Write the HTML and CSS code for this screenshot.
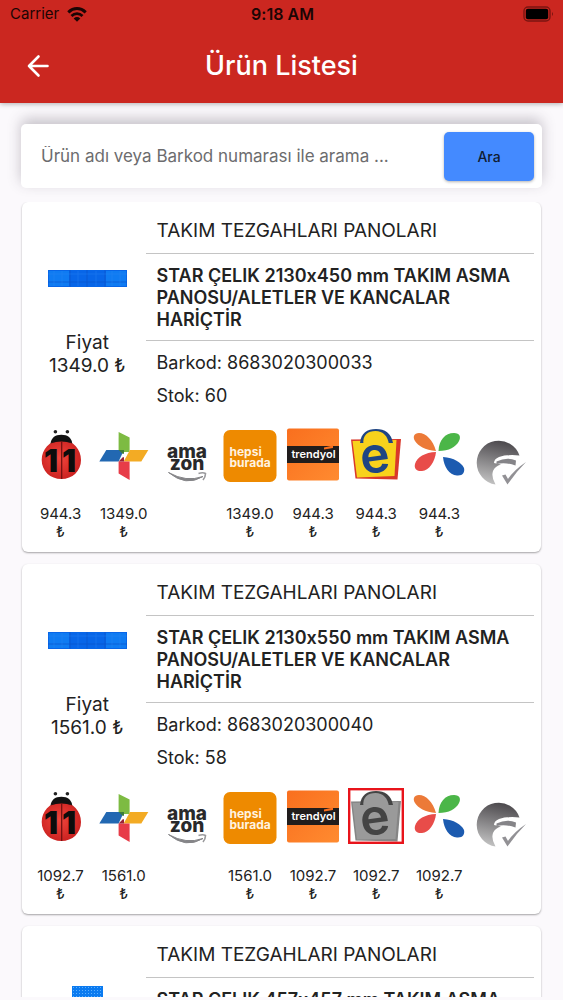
FILE: index.html
```html
<!DOCTYPE html>
<html lang="tr">
<head>
	<meta charset="UTF-8">
	<meta name="viewport" content="width=device-width, initial-scale=1">
	<title>Ürün Listesi</title>
	<link rel="stylesheet" href="styles.css">
</head>
<body>
	<!-- gradients -->
	<svg class="paints" aria-hidden="true">
		<defs>
			<radialGradient id="gBug" cx="45%" cy="45%" r="60%">
				<stop offset="0" stop-color="#f0453c"/>
				<stop offset="1" stop-color="#c9201f"/>
			</radialGradient>
			<linearGradient id="gTrend" x1="0" y1="0" x2="1" y2="1">
				<stop offset="0" stop-color="#f96f1e"/>
				<stop offset="1" stop-color="#ff8b30"/>
			</linearGradient>
			<linearGradient id="gGlobe" x1="0.6" y1="0" x2="0.4" y2="1">
				<stop offset="0" stop-color="#4b484c"/>
				<stop offset="1" stop-color="#c2c2c2"/>
			</linearGradient>
			<pattern id="pDots" width="3" height="3" patternUnits="userSpaceOnUse">
				<rect width="3" height="3" fill="#0a7af0"/>
				<rect x="1" y="1" width="1" height="1" fill="#5cb0ff"/>
			</pattern>
		</defs>
	</svg>
	<!-- logo symbols -->
	<svg class="sprite" aria-hidden="true">
		<symbol id="n11" viewBox="0 0 56 62">
			<circle cx="22.4" cy="5.7" r="1.8" fill="#222"/>
			<circle cx="34.4" cy="5.7" r="1.8" fill="#222"/>
			<path d="M17.5 18C18 12 22 8.8 28.4 8.8S38.8 12 39.3 18z" fill="#111"/>
			<path d="M28.4 14.500C40 14 48 23 48 34C48 45 39.500 53 28.400 53S8.700 45 8.700 34C8.700 23 17 14 28.400 14.500z" fill="url(#gBug)"/>
			<path d="M17.500 17.500Q28.400 8 39.300 17.500Q28.400 13.500 17.500 17.500z" fill="#111"/>
			<path d="M28.700 15V53" stroke="#6d1010" stroke-width="1.2"/>
			<text x="11" y="45.5" class="t-n11">1</text>
			<text x="29" y="45.5" class="t-n11">1</text>
		</symbol>
		<symbol id="pinwheel" viewBox="0 0 56 62">
			<path d="M22.6 6L33.6 11.5V26H22.6z" fill="#7dbb42"/>
			<path d="M10.3 24H28L22.6 35.5H3.3z" fill="#2268b2"/>
			<path d="M34 24H52.3L45.3 35.5H27.6z" fill="#f3ab24"/>
			<path d="M22.6 35.5H33.6V54L22.6 47.5z" fill="#e73c48"/>
			<path d="M22.6 35.5L28 30V35.5z" fill="#9b2338"/>
			<path d="M22.6 24H28V29z" fill="#3c7d3a"/>
			<circle cx="28.3" cy="29.5" r="2" fill="#fff"/>
		</symbol>
		<symbol id="amazon" viewBox="0 0 56 62">
			<text x="28" y="31.5" class="t-amazon">ama</text>
			<text x="28" y="43.5" class="t-amazon">zon</text>
			<path d="M9.500 46.500Q27 61 44 50.500Q27 56.500 9.500 46.500z" fill="#858588" stroke="#858588" stroke-width="1"/>
			<path d="M39.5 47.5Q44 46 46.5 47.5Q46.5 51 44 54" fill="none" stroke="#9a9a9d" stroke-width="1.6"/>
		</symbol>
		<symbol id="hepsiburada" viewBox="0 0 56 62">
			<rect x="1.5" y="4" width="53" height="52" rx="6.5" fill="#ee8a00"/>
			<text x="7.5" y="30" class="t-hepsi">hepsi</text>
			<text x="7.5" y="41" class="t-hepsi">burada</text>
		</symbol>
		<symbol id="trendyol" viewBox="0 0 56 62">
			<rect x="2" y="2.5" width="52" height="52" rx="2" fill="url(#gTrend)"/>
			<path d="M2 20H54V37H2z" fill="#211d1c"/>
			<path d="M39 21.5L48 19.5V22L39 23.5z" fill="#f96f1e"/>
			<text x="28.5" y="32" class="t-trend">trendyol</text>
		</symbol>
		<symbol id="epttavm" viewBox="0 0 56 62">
			<path d="M3 13.5L53 13L49.5 53.5L7.5 52.5z" fill="#d9382a"/>
			<path d="M4.5 15L48.5 14L46.5 50L9 51.5z" fill="#f8d21c"/>
			<path d="M12 17C13 7 19 3 28 3S43 7 45 17z" fill="#1f4583"/>
			<path d="M15.500 19C14 9 20 5 27.500 5S40 10 41 19z" fill="#f8d21c"/>
			<text x="27" y="46.5" class="t-e" transform="rotate(-8 27 32)">e</text>
		</symbol>
		<symbol id="epttavm-off" viewBox="0 0 56 62">
			<path d="M3 13.5L53 13L49.5 53.5L7.5 52.5z" fill="#858585"/>
			<path d="M4.5 15L50.5 14L47.5 51L9 51.5z" fill="#9a9a9a"/>
			<path d="M12 17C13 7 19 3 28 3S43 7 45 17z" fill="#444"/>
			<path d="M15.500 19C14 9 20 5 27.500 5S40 10 41 19z" fill="#9a9a9a"/>
			<text x="27" y="46.5" class="t-e off" transform="rotate(-8 27 32)">e</text>
			<rect x="1.2" y="1.2" width="53.6" height="53.6" fill="none" stroke="#e8141b" stroke-width="2.4"/>
		</symbol>
		<symbol id="petals" viewBox="0 0 56 62">
			<path d="M25 25C22 14 15 7 8 7C3 7 1.5 11 4 15C7 20 14 24 25 25z" fill="#ec7a38"/>
			<path d="M27.5 25C28 14 34 7 43 7C49 7 50 11 48 15C45 21 38 25 27.5 25z" fill="#4bb648"/>
			<path d="M25 26C24 36 18 44.5 11 45C5 45.5 3 42 4 38C6 31 14 26.5 25 26z" fill="#e84c49"/>
			<path d="M32 31C33 41 38 49 46 49.5C52 50 54 46 53 42C50 36 43 32 32 31z" fill="#1c5bb0"/>
		</symbol>
		<symbol id="globe" viewBox="0 0 56 62">
			<path d="M45.500 29.500A22 22 0 1 0 21.500 58.500Q17 51 19 45Q21 40 27 38.500L20 37Q20 33 25 31Q34 28 45.500 29.500z" fill="url(#gGlobe)"/>
			<path d="M22.500 35.500Q33 30.500 42 34.500L41.500 39.500Q32 36 22.500 38z" fill="#858488"/>
			<path d="M28 49.500L31.500 48.500L34 53Q40 44 52 36Q42 46 33.500 58.500z" fill="#929195"/>
		</symbol>
		<symbol id="panel" viewBox="0 0 79 32">
			<rect y="8" width="79" height="17" fill="#0866e8"/>
			<rect x="1" y="9" width="20" height="15" fill="#0f7bf2"/>
			<rect x="58" y="9" width="20" height="15" fill="#0f7bf2"/>
			<path d="M22 8V25M39 8V25M57 8V25M0 20H79" stroke="#0a51c4" stroke-width="1" opacity=".6"/>
			<path d="M6 9V24M14 9V24M30 9V24M48 9V24M64 9V24M72 9V24M0 12H79" stroke="#2a86f5" stroke-width="1" opacity=".4"/>
		</symbol>
		<symbol id="panel-square" viewBox="0 0 79 32">
			<rect x="24" width="31" height="32" fill="url(#pDots)"/>
		</symbol>
	</svg>

	<div class="app">
		<header class="header">
			<!-- status bar -->
			<div class="status">
				<div class="carrier">
					<span>Carrier</span>
					<svg width="20" height="15" viewBox="0 0 20 15" fill="none" stroke="#1c0504" aria-hidden="true">
						<path d="M1.3 5.3C6.5 0.3 13.5 0.3 18.7 5.3" stroke-width="3"/>
						<path d="M4.5 8.9C7.7 5.8 12.3 5.8 15.5 8.9" stroke-width="2.8"/>
						<path d="M10 14.8L6.7 11.4C8.7 9.6 11.3 9.6 13.3 11.4z" fill="#1c0504" stroke="none"/>
					</svg>
				</div>
				<div class="time">9:18 AM</div>
				<svg class="battery" width="32" height="16" viewBox="0 0 32 16" aria-hidden="true">
					<rect x="1" y="1" width="26" height="14" rx="4" fill="none" stroke="#7c1511" stroke-width="1.4"/>
					<rect x="2.8" y="2.8" width="22.4" height="10.4" rx="2" fill="#000"/>
					<path d="M29 6Q31 8 29 10z" fill="#7c1511"/>
				</svg>
			</div>
			<!-- title -->
			<div class="titlebar">
				<button class="back" type="button" aria-label="Geri">
					<svg width="22" height="24" viewBox="0 0 22 24" fill="none" stroke="#fff" stroke-width="2.6" stroke-linecap="round" stroke-linejoin="round" aria-hidden="true">
						<path d="M11.5 2.5L2 12L11.5 21.5M2 12H20.5"/>
					</svg>
				</button>
				<h1>Ürün Listesi</h1>
			</div>
		</header>

		<!-- search -->
		<form class="search">
			<input type="text" aria-label="Ürün arama" placeholder="Ürün adı veya Barkod numarası ile arama ...">
			<button type="button">Ara</button>
		</form>

		<!-- products -->
		<main class="list">
			<article class="card">
				<div class="top">
					<div class="photo">
						<svg aria-hidden="true"><use href="#panel"/></svg>
						<p>Fiyat<br>1349.0 ₺</p>
					</div>
					<div class="info">
						<p class="cate">TAKIM TEZGAHLARI PANOLARI</p>
						<h2>STAR ÇELIK 2130x450 mm TAKIM ASMA PANOSU/ALETLER VE KANCALAR HARİÇTİR</h2>
						<div class="stock">
							<p>Barkod: 8683020300033</p>
							<p>Stok: 60</p>
						</div>
					</div>
				</div>
				<ul class="shops">
					<li><svg><use href="#n11"/></svg><span>944.3 ₺</span></li>
					<li><svg><use href="#pinwheel"/></svg><span>1349.0 ₺</span></li>
					<li><svg><use href="#amazon"/></svg></li>
					<li><svg><use href="#hepsiburada"/></svg><span>1349.0 ₺</span></li>
					<li><svg><use href="#trendyol"/></svg><span>944.3 ₺</span></li>
					<li><svg><use href="#epttavm"/></svg><span>944.3 ₺</span></li>
					<li><svg><use href="#petals"/></svg><span>944.3 ₺</span></li>
					<li><svg><use href="#globe"/></svg></li>
				</ul>
			</article>

			<article class="card">
				<div class="top">
					<div class="photo">
						<svg aria-hidden="true"><use href="#panel"/></svg>
						<p>Fiyat<br>1561.0 ₺</p>
					</div>
					<div class="info">
						<p class="cate">TAKIM TEZGAHLARI PANOLARI</p>
						<h2>STAR ÇELIK 2130x550 mm TAKIM ASMA PANOSU/ALETLER VE KANCALAR HARİÇTİR</h2>
						<div class="stock">
							<p>Barkod: 8683020300040</p>
							<p>Stok: 58</p>
						</div>
					</div>
				</div>
				<ul class="shops">
					<li><svg><use href="#n11"/></svg><span>1092.7 ₺</span></li>
					<li><svg><use href="#pinwheel"/></svg><span>1561.0 ₺</span></li>
					<li><svg><use href="#amazon"/></svg></li>
					<li><svg><use href="#hepsiburada"/></svg><span>1561.0 ₺</span></li>
					<li><svg><use href="#trendyol"/></svg><span>1092.7 ₺</span></li>
					<li><svg><use href="#epttavm-off"/></svg><span>1092.7 ₺</span></li>
					<li><svg><use href="#petals"/></svg><span>1092.7 ₺</span></li>
					<li><svg><use href="#globe"/></svg></li>
				</ul>
			</article>

			<article class="card">
				<div class="top">
					<div class="photo">
						<svg aria-hidden="true"><use href="#panel-square"/></svg>
					</div>
					<div class="info">
						<p class="cate">TAKIM TEZGAHLARI PANOLARI</p>
						<h2>STAR ÇELIK 457x457 mm TAKIM ASMA</h2>
					</div>
				</div>
			</article>
		</main>
	</div>
</body>
</html>
```
FILE: styles.css
```css
*{
	box-sizing: border-box;
}
body,h1,h2,p,ul{
	margin: 0;
	padding: 0;
}
body{
	background-color: #fbf9fc;
	color: #222;
	font-family: Inter, "Noto Sans", sans-serif;
	font-size: 18px;
	line-height: 22px;
	font-feature-settings: "calt" 0; /* keep the plain x in 2130x450 */
}
ul{
	list-style: none;
}
button,input{
	font-family: inherit;
	border: 0;
}
.paints{
	position: absolute;
	width: 0;
	height: 0;
}
.sprite{
	display: none;
}

.app{
	display: flex;
	flex-direction: column;
	height: 100vh;
	padding-bottom: 3px;
}

/* header */
.header{
	flex: none;
	background-color: #cb2720;
	box-shadow: 0 1px 5px rgba(0,0,0,.3);
}
.status{
	display: grid;
	grid-template-columns: 1fr auto 1fr;
	align-items: center;
	height: 28px;
	padding: 0 8px 0 10px;
	font-size: 16px;
	color: #1c0504;
}
.carrier{
	display: flex;
	align-items: center;
	gap: 8px;
	font-size: 15px;
}
.time{
	font-weight: 600;
}
.battery{
	justify-self: end;
}
.titlebar{
	display: grid;
	grid-template-columns: 56px 1fr 56px;
	align-items: center;
	height: 75px;
}
.back{
	display: flex;
	padding: 0 0 0 27px;
	background: none;
}
.titlebar h1{
	font-size: 27px;
	font-weight: 500;
	line-height: 32px;
	color: #fff;
	text-align: center;
}

/* search */
.search{
	display: flex;
	flex: none;
	align-items: center;
	height: 64px;
	margin: 21px 21px 14px;
	padding: 8px;
	background-color: #fff;
	border-radius: 5px;
	box-shadow: 0 -5px 14px rgba(60,50,70,.28);
}
.search input{
	flex: 1;
	min-width: 0;
	padding: 0 12px;
	background: none;
	font-size: 17px;
	color: #222;
	outline: 0;
}
.search input::placeholder{
	color: #6c6c6e;
	opacity: 1;
}
.search button{
	width: 90px;
	height: 49px;
	border-radius: 5px;
	background-color: #448aff;
	box-shadow: 0 1px 3px rgba(0,0,0,.3);
	font-size: 14px;
	font-weight: 500;
	color: #101c33;
}

/* list */
.list{
	flex: 1;
	min-height: 0;
	overflow: hidden;
	padding: 0 22px;
}
.card{
	margin-bottom: 12px;
	padding: 7px 7px 11px;
	background-color: #fff;
	border-radius: 6px;
	box-shadow: 0 1px 2px rgba(0,0,0,.35);
}
.top{
	display: grid;
	grid-template-columns: 3fr 10fr;
}
.photo{
	padding-top: 53px;
	text-align: center;
}
.photo svg{
	display: block;
	width: 79px;
	height: 32px;
	margin: 0 auto 37px;
}
.photo p{
	font-size: 19px;
	line-height: 23px;
}
.info .cate{
	padding: 11px;
	border-bottom: 1px solid #c4c4c4;
	font-size: 19px;
}
.info h2{
	padding: 11px 11px 9px;
	border-bottom: 1px solid #c4c4c4;
	font-size: 18px;
	font-weight: 600;
	line-height: 22px;
}
.stock{
	display: grid;
	gap: 11px;
	padding: 11px 11px 19px;
}

/* shop logos and prices */
.shops{
	display: grid;
	grid-template-columns: repeat(8, 1fr);
}
.shops li{
	display: flex;
	flex-direction: column;
	align-items: center;
	gap: 17px;
}
.shops svg{
	width: 56px;
	height: 62px;
}
.shops span{
	width: min-content;
	font-size: 15px;
	line-height: 18px;
	text-align: center;
}

/* text in logos */
.t-n11{
	font-size: 31px;
	font-weight: 900;
	fill: #0c0c0c;
}
.t-amazon{
	font-size: 19px;
	font-weight: 800;
	text-anchor: middle;
	fill: #29292b;
}
.t-hepsi{
	font-size: 12px;
	font-weight: 700;
	fill: #fff3e0;
}
.t-trend{
	font-size: 11px;
	font-weight: 600;
	text-anchor: middle;
	fill: #fff;
}
.t-e{
	font-size: 50px;
	font-weight: 600;
	text-anchor: middle;
	fill: #1f4583;
}
.t-e.off{
	fill: #444;
}
```
